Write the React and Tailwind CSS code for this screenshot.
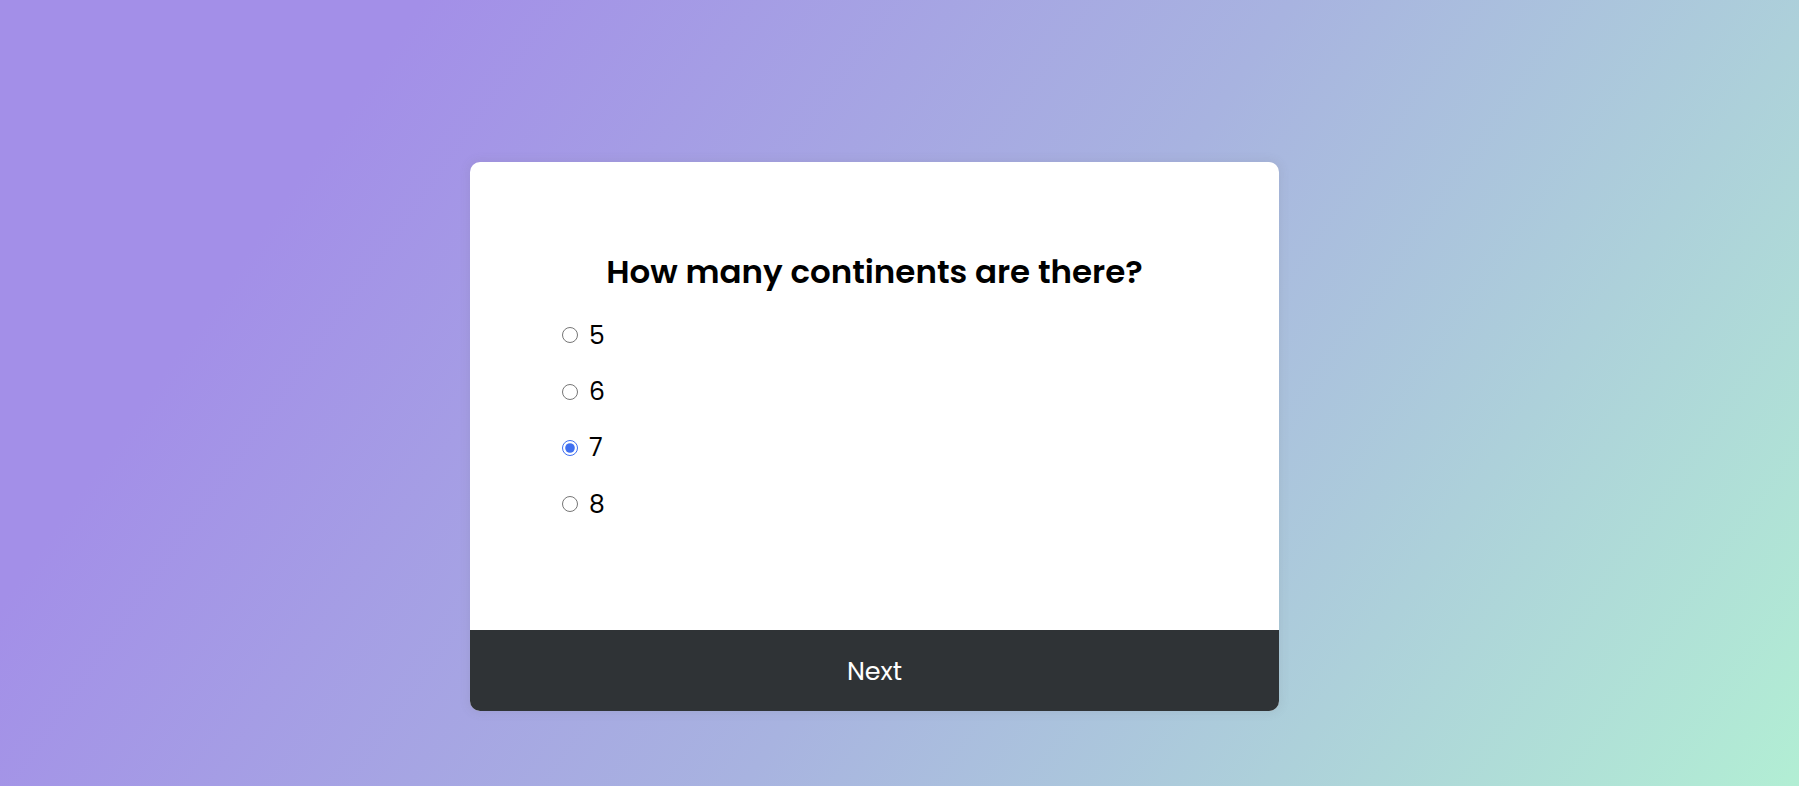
import { useState } from "react"

const options = ["5", "6", "7", "8"]

export default function App() {
    const [picked, setPicked] = useState("7")

    return (
        <div
            className="min-h-[786px] w-full bg-[linear-gradient(125deg,#a38fe8_18%,#a8b3e0_55%,#b2eed4_100%)] pt-[162px] pl-[470px]"
            style={{ fontFamily: '"Poppins", "Open Sans", "Liberation Sans", sans-serif' }}
        >
            <div className="flex h-[549px] w-[809px] flex-col overflow-hidden rounded-[10px] bg-white shadow-[0_0_10px_2px_rgba(100,100,100,0.1)]">
                <div className="flex-1 pt-[89px]">
                    <h2 className="text-center text-[32.5px] leading-[42px] font-semibold text-black">
                        How many continents are there?
                    </h2>
                    <ul className="mt-[14px] pl-[92px]">
                        {options.map((opt) => (
                            <li key={opt} className="flex h-[56.4px] items-center">
                                <label className="flex cursor-pointer items-center text-[25px] leading-none text-black">
                                    <input
                                        type="radio"
                                        name="answer"
                                        checked={picked === opt}
                                        onChange={() => setPicked(opt)}
                                        className="m-0 mr-[11px] h-[16px] w-[16px] accent-[#3f6ff0]"
                                    />
                                    {opt}
                                </label>
                            </li>
                        ))}
                    </ul>
                </div>
                <button
                    type="button"
                    className="h-[81px] w-full bg-[#2f3336] pt-[2px] text-[25.5px] text-white"
                >
                    Next
                </button>
            </div>
        </div>
    )
}
